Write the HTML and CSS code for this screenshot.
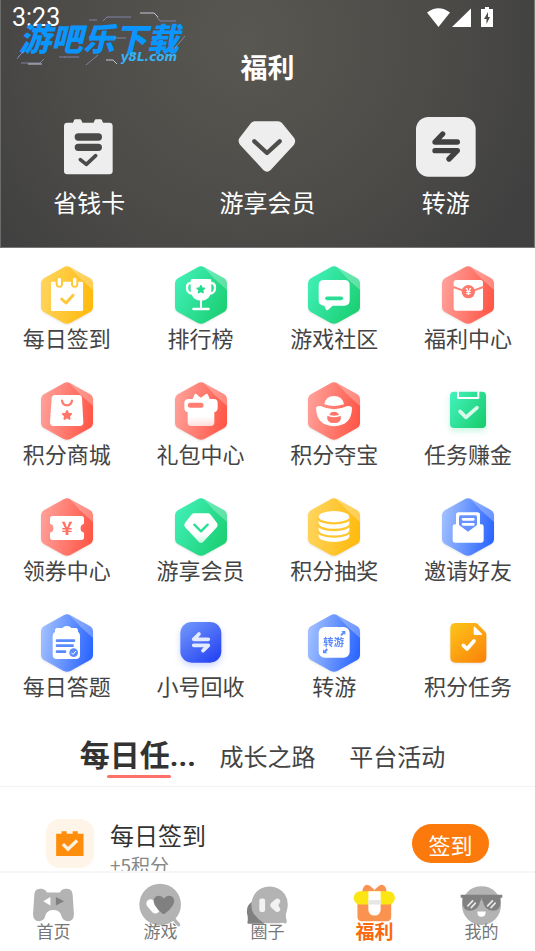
FILE: index.html
```html
<!DOCTYPE html>
<html lang="zh-CN">
<head>
<meta charset="utf-8">
<meta name="viewport" content="width=device-width, initial-scale=1">
<title>福利</title>
<link rel="stylesheet" href="styles.css">
</head>
<body>
<svg class="defs" aria-hidden="true">
  <defs>
    <linearGradient id="yellow" x1="0" y1=".4" x2="1" y2=".6"><stop offset="0" stop-color="#ffd45c"/><stop offset="1" stop-color="#ffba0c"/></linearGradient>
    <linearGradient id="green" x1="0" y1=".2" x2="1" y2=".8"><stop offset="0" stop-color="#40f0b8"/><stop offset="1" stop-color="#1ace70"/></linearGradient>
    <linearGradient id="red" x1="0" y1=".4" x2="1" y2=".6"><stop offset="0" stop-color="#ff9f98"/><stop offset="1" stop-color="#ff5646"/></linearGradient>
    <linearGradient id="blue" x1="0" y1=".4" x2="1" y2=".6"><stop offset="0" stop-color="#a0bfff"/><stop offset="1" stop-color="#2a65ff"/></linearGradient>
    <linearGradient id="indigo" x1=".1" y1="0" x2=".9" y2="1"><stop offset="0" stop-color="#7096fb"/><stop offset="1" stop-color="#2340f3"/></linearGradient>
    <linearGradient id="amber" x1=".1" y1="0" x2=".9" y2="1"><stop offset="0" stop-color="#fcc21a"/><stop offset="1" stop-color="#fb8409"/></linearGradient>
    <linearGradient id="fade" x1="0" y1="0" x2="0" y2="1"><stop offset=".7" stop-color="#fff"/><stop offset="1" stop-color="#fff" stop-opacity=".75"/></linearGradient>
    <symbol id="hex" viewBox="0 0 180 180">
      <path d="M80 7Q90 1 100 7L158 39Q168 45 168 56V125Q168 136 158 142L100 174Q90 179 80 174L22 142Q12 136 12 125V56Q12 45 22 39Z"/>
      <path fill="#fff" fill-opacity=".28" d="M97 5L100 7L158 39Q168 45 168 56V75L132 43Z"/>
    </symbol>
    <symbol id="star" viewBox="-10 -10 20 20">
      <path stroke="currentColor" stroke-width="3" stroke-linejoin="round" fill="currentColor" d="M0-8L2.4-3.2L7.6-2.5L3.8 1.2L4.7 6.5L0 4L-4.7 6.5L-3.8 1.2L-7.6-2.5L-2.4-3.2Z"/>
    </symbol>
  </defs>
</svg>

<main class="content">
  <header class="hero">
    <div class="status">
      <span class="time">3:23</span>
      <svg class="signals" viewBox="0 0 68 20" aria-hidden="true">
        <path fill="#fff" d="M0 4.500Q11.500-4 23 4.500L11.500 19Z"/>
        <path fill="#fff" d="M44 .5V19H25Z"/>
        <path fill="#fff" d="M58-1h4v2h4v18H54V1h4Z"/>
        <path fill="#4b4b49" d="M61 4L57 11h2.500v5L63 9h-2Z"/>
      </svg>
    </div>
    <div class="watermark">
      <svg class="circuit" viewBox="0 0 170 54" aria-hidden="true">
        <g fill="none" stroke="#8d8fc0" stroke-width="1" opacity=".8">
          <path d="M73 7H81M87 8L91 4H115M141 4L144 8H160M8 38L2 44M5 41L1 46"/>
          <path d="M5 50H24L28 46M43 44H49M48 44H63M169 23L159 35H156M98 25H110M82 42L70 52"/>
        </g>
        <g fill="none" stroke="#c4c8d6" stroke-width="1">
          <path d="M124 0H138L142 4M90 47H97L101 51M12 51H26"/>
        </g>
      </svg>
      <span class="mark-name">游吧乐下载</span>
      <span class="mark-site">y8L.com</span>
    </div>
    <h1 class="title">福利</h1>
    <nav class="services" aria-label="服务">
      <a class="service" href="#card">
        <svg viewBox="0 0 180 180" aria-hidden="true">
          <path fill="#eee" d="M25 17H42L45 10Q46 7 49 7H63Q66 7 67 10L70 17H104L107 10Q108 7 111 7H125Q128 7 129 10L132 17H151Q161 17 161 27V162Q161 172 151 172H25Q15 172 15 162V27Q15 17 25 17Z"/>
          <g fill="none" stroke="#4a4a48" stroke-linecap="round">
            <path stroke-width="22" d="M58 60H118M58 91H118"/>
            <path stroke-width="11" stroke-linejoin="round" d="M64 128L82 142L110 116"/>
          </g>
        </svg>
        <span>省钱卡</span>
      </a>
      <a class="service" href="#vip">
        <svg viewBox="0 0 180 180" aria-hidden="true">
          <path fill="#eee" d="M53 13H123Q130 13 135 18L171 62Q178 72 171 83L101 159Q90 169 79 159L9 83Q1 72 8 62L42 18Q47 13 53 13Z"/>
          <path fill="none" stroke="#4e4d4a" stroke-width="13" stroke-linecap="round" stroke-linejoin="round" d="M52 73L90 108L128 73"/>
        </svg>
        <span>游享会员</span>
      </a>
      <a class="service" href="#transfer">
        <svg viewBox="0 0 180 180" aria-hidden="true">
          <rect width="179" height="179" rx="37" fill="#eee"/>
          <path fill="none" stroke="#424242" stroke-width="16" stroke-linecap="round" stroke-linejoin="round" d="M124 75H57L80 51M57 101H124L99 126"/>
        </svg>
        <span>转游</span>
      </a>
    </nav>
  </header>

  <nav class="features" aria-label="功能">
    <a class="feature" href="#f1">
      <svg viewBox="0 0 180 180" aria-hidden="true">
        <use href="#hex" fill="url(#yellow)"/>
        <rect x="42" y="50" width="96" height="88" rx="4" fill="#fff"/>
        <g stroke-linecap="round" fill="none">
          <path stroke="#ffc935" stroke-width="22" d="M67 46V57M113 46V57"/>
          <path stroke="#fff" stroke-width="10" d="M67 43V58M113 43V58"/>
          <path stroke="#ffc83a" stroke-width="9" stroke-linejoin="round" d="M74 102L87 114L108 91"/>
        </g>
      </svg>
      <span>每日签到</span>
    </a>
    <a class="feature" href="#f2">
      <svg viewBox="0 0 180 180" aria-hidden="true">
        <use href="#hex" fill="url(#green)"/>
        <path fill="none" stroke="#fff" stroke-width="7" d="M64 56Q48 50 48 69Q48 87 69 86M116 56Q132 50 132 69Q132 87 111 86"/>
        <path fill="#fff" d="M63 42H117Q121 42 121 47V78Q118 106 90 107Q62 106 59 78V47Q59 42 63 42ZM87 104H93V132H87Z"/>
        <path stroke="#fff" stroke-width="7" stroke-linecap="round" d="M67 132H113"/>
        <use href="#star" x="75" y="59" width="29" height="29" color="#24dc8e"/>
      </svg>
      <span>排行榜</span>
    </a>
    <a class="feature" href="#f3">
      <svg viewBox="0 0 180 180" aria-hidden="true">
        <use href="#hex" fill="url(#green)"/>
        <path fill="#fff" d="M60 45H121Q137 45 137 61V106Q137 122 121 122H86L72 135Q67 138 65 132L61 122Q44 122 44 106V61Q44 45 60 45Z"/>
        <path stroke="#29de94" stroke-width="11" stroke-linecap="round" d="M69 100H112"/>
      </svg>
      <span>游戏社区</span>
    </a>
    <a class="feature" href="#f4">
      <svg viewBox="0 0 180 180" aria-hidden="true">
        <use href="#hex" fill="url(#red)"/>
        <rect x="47" y="45" width="88" height="92" rx="8" fill="#fff"/>
        <path fill="none" stroke="#ff8075" stroke-width="6" d="M46 66L76 77M106 77L136 66"/>
        <circle cx="91" cy="80" r="20" fill="#ff786d"/>
        <text class="yen-small" x="91" y="91" text-anchor="middle">¥</text>
      </svg>
      <span>福利中心</span>
    </a>
    <a class="feature" href="#f5">
      <svg viewBox="0 0 180 180" aria-hidden="true">
        <use href="#hex" fill="url(#red)"/>
        <path fill="#fff" d="M54 42H125Q134 42 135 51L139 124Q139 135 129 135H49Q39 135 39 124L44 51Q45 42 54 42Z"/>
        <path fill="none" stroke="#ff7c71" stroke-width="7" stroke-linecap="round" d="M75 59Q77 73 90 73Q103 73 105 59"/>
        <use href="#star" x="73" y="86" width="34" height="34" color="#ff776b"/>
      </svg>
      <span>积分商城</span>
    </a>
    <a class="feature" href="#f6">
      <svg viewBox="0 0 180 180" aria-hidden="true">
        <use href="#hex" fill="url(#red)"/>
        <path fill="url(#fade)" d="M54 54H65L70 41Q72 37 76 39L87 49Q90 51 93 48L105 39Q109 37 111 41L116 54H128Q140 54 140 66V80Q140 92 130 93V124Q130 135 120 135H60Q50 135 50 124V93Q40 92 40 80V66Q40 54 54 54Z"/>
        <path stroke="#ff7d72" stroke-width="15" stroke-linecap="round" d="M58 73H90"/>
      </svg>
      <span>礼包中心</span>
    </a>
    <a class="feature" href="#f7">
      <svg viewBox="0 0 180 180" aria-hidden="true">
        <use href="#hex" fill="url(#red)"/>
        <path fill="#fff" d="M61 70Q65 45 90 45Q115 45 120 70Q90 80 61 70Z"/>
        <path fill="#fff" d="M36 82Q37 74 50 75Q90 94 130 75Q143 74 144 82Q143 134 90 136Q38 134 36 82Z"/>
        <path fill="#ff766a" d="M76 102Q79 92 90 92Q101 92 105 102Q90 107 76 102ZM70 104Q90 114 110 104Q115 126 90 126Q66 126 70 104Z"/>
      </svg>
      <span>积分夺宝</span>
    </a>
    <a class="feature" href="#f8">
      <svg class="glow-green" viewBox="0 0 180 180" aria-hidden="true">
        <rect x="36" y="32" width="108" height="109" rx="12" fill="url(#green)"/>
        <path fill="none" stroke="#fff" stroke-width="6" stroke-linejoin="round" d="M60 31V51H121V31"/>
        <path fill="none" stroke="#d8fbeb" stroke-width="11" stroke-linecap="round" stroke-linejoin="round" d="M66 91L84 109L117 80"/>
      </svg>
      <span>任务赚金</span>
    </a>
    <a class="feature" href="#f9">
      <svg viewBox="0 0 180 180" aria-hidden="true">
        <use href="#hex" fill="url(#red)"/>
        <path fill="#fff" d="M47 57H133Q141 57 141 65V80A14 14 0 0 0 141 107V121Q141 129 133 129H47Q39 129 39 121V107A14 14 0 0 0 39 80V65Q39 57 47 57Z"/>
        <text class="yen" x="90" y="113" text-anchor="middle">¥</text>
      </svg>
      <span>领券中心</span>
    </a>
    <a class="feature" href="#f10">
      <svg viewBox="0 0 180 180" aria-hidden="true">
        <use href="#hex" fill="url(#green)"/>
        <path fill="url(#fade)" d="M70 49H111Q116 49 119 53L138 78Q142 84 138 90L97 134Q90 141 83 134L42 90Q37 84 42 78L61 53Q65 49 70 49Z"/>
        <path fill="none" stroke="#2ade95" stroke-width="7" stroke-linecap="round" stroke-linejoin="round" d="M70 83L90 103L110 83"/>
      </svg>
      <span>游享会员</span>
    </a>
    <a class="feature" href="#f11">
      <svg viewBox="0 0 180 180" aria-hidden="true">
        <use href="#hex" fill="url(#yellow)"/>
        <path fill="#fff" d="M44 59A46 17 0 0 1 136 59V118A46 17 0 0 1 44 118Z"/>
        <path fill="none" stroke="#ffc62f" stroke-width="7" d="M42 62A48 17 0 0 0 138 62M42 82A48 17 0 0 0 138 82M42 102A48 17 0 0 0 138 102"/>
      </svg>
      <span>积分抽奖</span>
    </a>
    <a class="feature" href="#f12">
      <svg viewBox="0 0 180 180" aria-hidden="true">
        <use href="#hex" fill="url(#blue)"/>
        <path fill="#fff" d="M62 46H118Q126 46 126 54V82H130Q137 82 137 89V130Q137 137 130 137H51Q44 137 44 130V89Q44 82 51 82H54V54Q54 46 62 46Z"/>
        <path fill="#6792ff" d="M68 55H112Q117 55 117 60V84L90 104L63 84V60Q63 55 68 55Z"/>
        <path stroke="#fff" stroke-width="8" stroke-linecap="round" d="M75 67H106M75 82H106"/>
      </svg>
      <span>邀请好友</span>
    </a>
    <a class="feature" href="#f13">
      <svg viewBox="0 0 180 180" aria-hidden="true">
        <use href="#hex" fill="url(#blue)"/>
        <path fill="#fff" d="M60 45H76Q80 39 90 39Q100 39 103 45H116Q124 46 123 56Q129 60 129 68V126Q129 138 117 138H59Q47 138 47 126V68Q47 60 54 57Q53 46 60 45Z"/>
        <path stroke="#5b8aff" stroke-width="8" stroke-linecap="round" d="M60 83H111M60 98H107M60 116H84"/>
        <circle cx="110" cy="119" r="13" fill="#5b8aff"/>
        <path fill="none" stroke="#fff" stroke-width="3" d="M103 119L108 124L117 114"/>
      </svg>
      <span>每日答题</span>
    </a>
    <a class="feature" href="#f14">
      <svg class="glow-blue" viewBox="0 0 180 180" aria-hidden="true">
        <rect x="28" y="27" width="123" height="122" rx="34" fill="url(#indigo)"/>
        <path fill="none" stroke="#e3e9ff" stroke-width="11" stroke-linecap="round" stroke-linejoin="round" d="M112 79H68L84 63M68 97H112L96 113"/>
      </svg>
      <span>小号回收</span>
    </a>
    <a class="feature" href="#f15">
      <svg viewBox="0 0 180 180" aria-hidden="true">
        <use href="#hex" fill="url(#blue)"/>
        <rect x="44" y="42" width="93" height="92" rx="18" fill="#fff"/>
        <text class="mini" x="89" y="99" text-anchor="middle">转游</text>
        <path fill="#5b8bff" d="M112 54H124V66L120 62L113 69L109 65L116 58ZM70 121H57V109L61 113L67 106L72 110L66 117Z"/>
      </svg>
      <span>转游</span>
    </a>
    <a class="feature" href="#f16">
      <svg viewBox="0 0 180 180" aria-hidden="true">
        <path fill="url(#amber)" d="M54 30H112Q116 30 119 33L142 57Q145 60 145 64V133Q145 149 129 149H53Q37 149 37 133V46Q37 30 54 30Z"/>
        <path fill="#fff" d="M107 43Q108 39 111 42L132 62Q134 66 129 66H111Q107 66 107 62Z"/>
        <path fill="none" stroke="#fff" stroke-width="11" stroke-linecap="round" stroke-linejoin="round" d="M76 97L87 108L108 84"/>
      </svg>
      <span>积分任务</span>
    </a>
  </nav>

  <div class="tabs" role="tablist">
    <button class="tab active" type="button" role="tab" aria-selected="true">每日任...</button>
    <button class="tab" type="button" role="tab" aria-selected="false">成长之路</button>
    <button class="tab" type="button" role="tab" aria-selected="false">平台活动</button>
  </div>

  <section class="task">
    <div class="task-icon">
      <svg viewBox="0 0 82 74" aria-hidden="true">
        <path fill="#fe8d0c" d="M0 8H16V1H31V8H49V1H64V8H81V74H0Z"/>
        <path fill="none" stroke="#fff1e0" stroke-width="10" d="M20 39L35 54L62 28"/>
      </svg>
    </div>
    <div class="task-text">
      <h2>每日签到</h2>
      <p>+5积分</p>
    </div>
    <button class="sign" type="button">签到</button>
  </section>
</main>

<nav class="tabbar" aria-label="主导航">
  <a class="item" href="#home">
    <svg viewBox="2 0 129 129" aria-hidden="true">
      <path fill="#b3b3b3" d="M28 26Q10 26 9 42L5 100Q5 121 22 121Q38 121 41 105Q45 88 65 88Q84 88 88 105Q92 121 108 121Q125 121 125 100L121 42Q119 26 102 26Q88 26 84 37H46Q40 26 28 26Z"/>
      <path fill="#fff" d="M56 50V75L35 62Z"/><path fill="#808080" d="M72 50V75L96 62Z"/>
    </svg>
    <span>首页</span>
  </a>
  <a class="item" href="#games">
    <svg viewBox="2 0 129 129" aria-hidden="true">
      <circle cx="64" cy="72" r="61" fill="#b3b3b3"/>
      <path stroke="#b3b3b3" stroke-width="10" stroke-linecap="round" d="M100 110L118 131"/>
      <path stroke="#fff" stroke-width="25" stroke-linecap="round" d="M36 69L50 86"/>
      <path fill="#808080" d="M75 54Q84 42 98 48Q110 57 102 73Q93 88 77 99Q74 101 71 99Q56 87 48 73Q40 57 52 48Q66 42 75 54Z"/>
    </svg>
    <span>游戏</span>
  </a>
  <a class="item" href="#circle">
    <svg viewBox="2 0 129 129" aria-hidden="true">
      <path fill="#808080" d="M20 64Q2 75 5 98Q9 110 6 126Q7 129 10 128H55V90Z"/>
      <path fill="#b3b3b3" d="M71 19Q99 19 116 42Q130 64 121 92Q117 104 121 118Q123 130 116 127Q108 123 99 127H55Q30 110 21 92Q12 64 28 40Q45 19 71 19Z"/>
      <rect x="41" y="54" width="17" height="40" rx="6" fill="#f2f2f2"/>
      <path fill="#f2f2f2" d="M90 55Q101 52 103 62L97 74L103 86Q101 97 90 93L75 80Q70 74 75 68Z"/>
    </svg>
    <span>圈子</span>
  </a>
  <a class="item current" href="#welfare" aria-current="page">
    <svg viewBox="2 0 129 129" aria-hidden="true">
      <path fill="#fb9350" d="M29 35Q31 17 42 14Q51 14 65 29Q79 14 88 14Q99 17 101 35ZM15 60H114V108Q114 121 101 121H28Q15 121 15 108Z"/>
      <rect x="4" y="33" width="121" height="39" rx="19" fill="#fbe614"/>
      <path fill="#fff" d="M47 33H83V87Q82 104 65 104Q48 104 47 87Z"/>
      <path fill="#e6e6e6" d="M47 59H83V72H47Z"/>
    </svg>
    <span>福利</span>
  </a>
  <a class="item" href="#me">
    <svg viewBox="2 0 129 129" aria-hidden="true">
      <circle cx="65" cy="75" r="57" fill="#b3b3b3"/>
      <path fill="#808080" d="M4 43H126V52H121V66Q120 90 98 90Q74 90 68 60H62Q56 90 32 90Q10 90 9 66V52H4Z"/>
      <path stroke="#e8e8e8" stroke-width="5" stroke-linecap="round" d="M25 76L39 61M35 81L47 68M83 76L97 61M93 81L105 68"/>
      <path stroke="#b3b3b3" stroke-width="2" d="M65 53V72"/>
      <path fill="#fff" d="M53 92H77Q78 107 65 108Q52 107 53 92Z"/>
    </svg>
    <span>我的</span>
  </a>
</nav>
</body>
</html>
```
FILE: styles.css
```css
* {
  box-sizing: border-box;
}

body {
  margin: 0;
  height: 100vh;
  display: flex;
  flex-direction: column;
  background: #fff;
  color: #444;
  font-family: "Noto Sans CJK SC", "Noto Sans", sans-serif;
}

a {
  color: inherit;
  text-decoration: none;
}

button {
  border: 0;
  padding: 0;
  background: none;
  color: inherit;
  font: inherit;
}

svg {
  display: block;
  overflow: visible;
}

.defs {
  position: absolute;
  width: 0;
  height: 0;
}

.content {
  flex: 1;
  min-height: 0;
  overflow-y: auto;
  scrollbar-width: none;
}

/* Dark header */

.hero {
  position: relative;
  padding-bottom: 30px;
  background: radial-gradient(circle at 46% 16%, #595751 0, #4c4b48 190px, #404040 320px);
  box-shadow: inset 1px 0 #6c6c6a, inset -1px -1px #777;
  color: #fff;
}

.status {
  display: flex;
  justify-content: space-between;
  align-items: center;
  height: 36px;
  padding: 0 40px 0 12px;
}

.time {
  font-family: Roboto, sans-serif;
  font-size: 25px;
  line-height: 36px;
}

.signals {
  width: 68px;
  height: 20px;
}

.watermark {
  position: absolute;
  top: 13px;
  left: 16px;
  width: 170px;
  color: #0a95ff;
  font-style: italic;
  font-weight: 900;
}

.circuit {
  position: absolute;
  top: 0;
  left: 0;
  width: 170px;
  height: 54px;
}

.mark-name {
  display: block;
  padding-left: 3px;
  font-size: 32px;
  line-height: 48px;
  white-space: nowrap;
}

.mark-site {
  position: absolute;
  top: 36px;
  right: 9px;
  color: #35b4f7;
  font-family: "DejaVu Sans", sans-serif;
  font-size: 12px;
  font-weight: 700;
  line-height: 16px;
}

.title {
  margin: 10px 0 30px;
  font-size: 27px;
  font-weight: 700;
  line-height: 41px;
  text-align: center;
}

.services {
  display: grid;
  grid-template-columns: repeat(3, 1fr);
}

.service {
  display: flex;
  flex-direction: column;
  align-items: center;
  gap: 9px;
  font-size: 24px;
  line-height: 32px;
}

.service svg,
.feature svg {
  width: 60px;
  height: 60px;
}

/* Feature grid */

.features {
  display: grid;
  grid-template-columns: repeat(4, 1fr);
  row-gap: 32px;
  padding: 17px 0 32px;
}

.feature {
  display: flex;
  flex-direction: column;
  align-items: center;
  font-size: 22px;
  line-height: 24px;
}

.feature svg {
  filter: drop-shadow(0 1px 1px rgba(0, 0, 0, 0.1));
}

.feature .glow-green {
  filter: drop-shadow(0 3px 3px rgba(40, 220, 140, 0.25));
}

.feature .glow-blue {
  filter: drop-shadow(0 3px 3px rgba(60, 90, 250, 0.25));
}

.yen,
.yen-small,
.mini {
  font-weight: 700;
}

.yen {
  fill: #ff7065;
  font-size: 56px;
}

.yen-small {
  fill: #fff;
  font-size: 30px;
}

.mini {
  fill: #5b8bff;
  font-size: 31px;
}

/* Tabs */

.tabs {
  display: grid;
  grid-template-columns: repeat(3, 1fr);
  height: 58px;
  padding: 0 73px;
  border-bottom: 1px solid #f3f3f3;
}

.tab {
  position: relative;
  height: 56px;
  padding-bottom: 3px;
  font-size: 24px;
  line-height: 53px;
  white-space: nowrap;
}

.tab.active {
  color: #333;
  font-family: Roboto, "Noto Sans CJK SC", sans-serif;
  font-size: 30px;
  font-weight: 700;
}

.tab.active::after {
  content: "";
  position: absolute;
  bottom: 7px;
  left: 50%;
  width: 64px;
  height: 3px;
  margin-left: -31px;
  border-radius: 2px;
  background: #ff7068;
}

/* Task list */

.task {
  display: flex;
  align-items: flex-start;
  padding: 32px 46px 24px;
}

.task-icon {
  display: grid;
  place-items: center;
  width: 48px;
  height: 49px;
  border-radius: 14px;
  background: #fff4e8;
}

.task-icon svg {
  width: 28px;
  height: 25px;
}

.task-text {
  flex: 1;
  padding-left: 16px;
}

.task-text h2 {
  margin: 0;
  color: #333;
  font-size: 24px;
  font-weight: 400;
  line-height: 32px;
}

.task-text p {
  margin: 0;
  color: #888;
  font-size: 19px;
  line-height: 28px;
}

.sign {
  width: 77px;
  height: 39px;
  margin-top: 5px;
  border-radius: 20px;
  background: #fc7a0c;
  color: #fff;
  font-size: 22px;
  line-height: 38px;
}

/* Bottom bar */

.tabbar {
  display: grid;
  grid-template-columns: repeat(5, 1fr);
  padding: 7px 0 9px;
  border-top: 2px solid #f6f6f6;
  background: #fff;
}

.item {
  display: flex;
  flex-direction: column;
  align-items: center;
  height: 62px;
  color: #777;
  font-size: 17px;
  line-height: 22px;
}

.item svg {
  flex: none;
  width: 44px;
  height: 44px;
  margin-bottom: -4px;
}

.item.current {
  color: #f96a0c;
  font-size: 19px;
  font-weight: 700;
}
```
